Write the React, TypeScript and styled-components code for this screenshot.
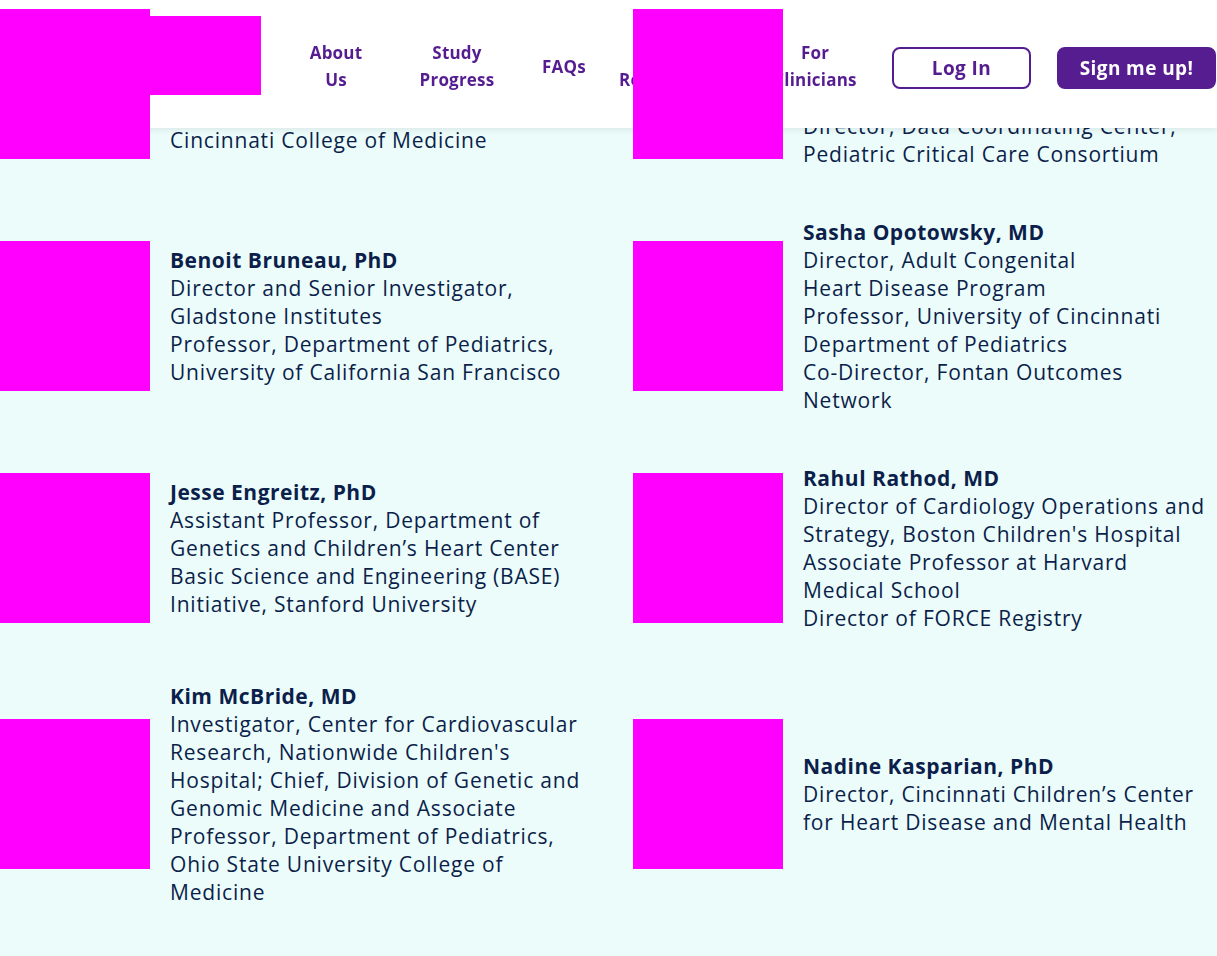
import React from 'react';
import styled, { createGlobalStyle } from 'styled-components';

const GlobalStyle = createGlobalStyle`
  html, body {
    margin: 0;
    padding: 0;
    background: #ecfcfb;
    font-family: 'Open Sans', Lato, sans-serif;
  }
`;

const Header = styled.header`
  position: fixed;
  top: 0;
  left: 0;
  right: 0;
  z-index: 10;
  height: 128px;
  box-sizing: border-box;
  padding-top: 4px;
  background: #ffffff;
  box-shadow: 0 2px 6px rgba(0, 0, 0, 0.08);
  display: flex;
  align-items: center;
`;

const Logo = styled.div`
  align-self: flex-start;
  margin-top: 12px;
  width: 261px;
  height: 79px;
  background: #ff00ff;
  flex-shrink: 0;
`;

const Nav = styled.nav`
  display: flex;
  align-items: center;
  margin-left: 21px;
`;

const NavItem = styled.a<{ $width: number }>`
  width: ${({ $width }) => $width}px;
  text-align: center;
  color: #561d90;
  font-weight: 700;
  font-size: 17px;
  line-height: 27px;
  letter-spacing: 0.2px;
  text-decoration: none;
`;

const Actions = styled.div`
  display: flex;
  gap: 26px;
  margin-left: 2px;
  margin-top: 4px;
`;

const Button = styled.button<{ $filled?: boolean; $width: number }>`
  width: ${({ $width }) => $width}px;
  height: 42px;
  box-sizing: border-box;
  border-radius: 8px;
  border: 2px solid #561d90;
  background: ${({ $filled }) => ($filled ? '#561d90' : '#ffffff')};
  color: ${({ $filled }) => ($filled ? '#ffffff' : '#561d90')};
  font-family: 'Open Sans', sans-serif;
  font-weight: 700;
  font-size: 19px;
  line-height: 24px;
  letter-spacing: 0.4px;
  padding: 0;
  cursor: pointer;
`;

const Team = styled.section`
  display: grid;
  grid-template-columns: 633px 1fr;
  row-gap: 50px;
  padding-bottom: 50px;
`;

const Card = styled.div`
  display: flex;
  align-items: center;
  gap: 20px;
`;

const Photo = styled.div`
  position: relative;
  z-index: 20;
  width: 150px;
  height: 150px;
  flex-shrink: 0;
  background: #ff00ff;
`;

const Info = styled.div`
  color: #0b1f4a;
  font-size: 21px;
  line-height: 28px;
  letter-spacing: 0.8px;
`;

const Name = styled.div`
  font-weight: 700;
  letter-spacing: 0.5px;
`;

const Line = styled.div`
  white-space: nowrap;
`;

type Member = { name: string; lines: string[] };

const members: Member[] = [
  {
    name: 'Robert B. Hinton, MD',
    lines: [
      'Director, Cardiovascular Genetics,',
      'Cincinnati Children\u2019s Hospital',
      'Associate Professor, University of',
      'Cincinnati College of Medicine',
    ],
  },
  {
    name: 'Richard Holubkov, PhD',
    lines: [
      'Research Professor, Department of',
      'Pediatrics, University of Utah',
      'School of Medicine',
      'Director, Data Coordinating Center,',
      'Pediatric Critical Care Consortium',
    ],
  },
  {
    name: 'Benoit Bruneau, PhD',
    lines: [
      'Director and Senior Investigator,',
      'Gladstone Institutes',
      'Professor, Department of Pediatrics,',
      'University of California San Francisco',
    ],
  },
  {
    name: 'Sasha Opotowsky, MD',
    lines: [
      'Director, Adult Congenital',
      'Heart Disease Program',
      'Professor, University of Cincinnati',
      'Department of Pediatrics',
      'Co-Director, Fontan Outcomes',
      'Network',
    ],
  },
  {
    name: 'Jesse Engreitz, PhD',
    lines: [
      'Assistant Professor, Department of',
      'Genetics and Children\u2019s Heart Center',
      'Basic Science and Engineering (BASE)',
      'Initiative, Stanford University',
    ],
  },
  {
    name: 'Rahul Rathod, MD',
    lines: [
      'Director of Cardiology Operations and',
      "Strategy, Boston Children's Hospital",
      'Associate Professor at Harvard',
      'Medical School',
      'Director of FORCE Registry',
    ],
  },
  {
    name: 'Kim McBride, MD',
    lines: [
      'Investigator, Center for Cardiovascular',
      "Research, Nationwide Children's",
      'Hospital; Chief, Division of Genetic and',
      'Genomic Medicine and Associate',
      'Professor, Department of Pediatrics,',
      'Ohio State University College of',
      'Medicine',
    ],
  },
  {
    name: 'Nadine Kasparian, PhD',
    lines: [
      'Director, Cincinnati Children\u2019s Center',
      'for Heart Disease and Mental Health',
    ],
  },
];

const navLinks = [
  { label: ['About', 'Us'], width: 108 },
  { label: ['Study', 'Progress'], width: 134 },
  { label: ['FAQs'], width: 80 },
  { label: ['For', 'Researchers'], width: 136 },
  { label: ['For', 'Clinicians'], width: 150 },
];

export default function App() {
  return (
    <>
      <GlobalStyle />
      <Header>
        <Logo />
        <Nav>
          {navLinks.map((link) => (
            <NavItem key={link.label.join(' ')} href='#' $width={link.width}>
              {link.label.map((word) => (
                <div key={word}>{word}</div>
              ))}
            </NavItem>
          ))}
        </Nav>
        <Actions>
          <Button $width={139}>Log In</Button>
          <Button $width={159} $filled>
            Sign me up!
          </Button>
        </Actions>
      </Header>
      <Team>
        {members.map((member) => (
          <Card key={member.name}>
            <Photo />
            <Info>
              <Name>{member.name}</Name>
              {member.lines.map((line) => (
                <Line key={line}>{line}</Line>
              ))}
            </Info>
          </Card>
        ))}
      </Team>
    </>
  );
}
